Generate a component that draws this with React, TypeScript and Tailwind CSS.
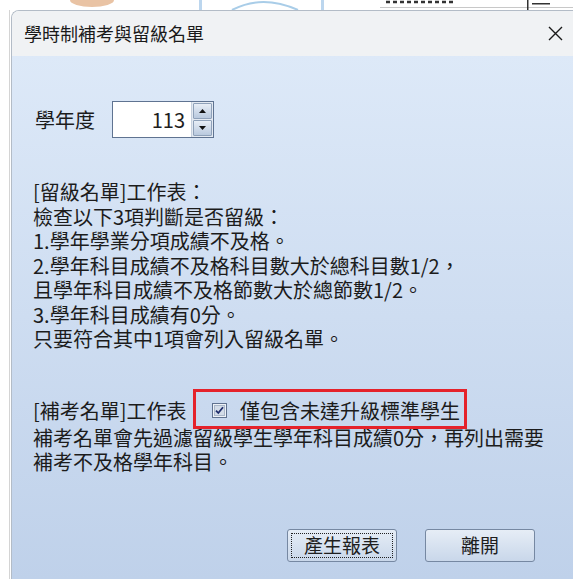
import React from 'react';

const font = { fontFamily: '"Noto Sans CJK TC", "Noto Sans", sans-serif' };

const TopStrip = () => (
  <div className="h-[10px] w-full bg-white">
    <svg width="573" height="10" viewBox="0 0 573 10">
      <ellipse cx="92" cy="0" rx="22" ry="7" fill="#e9c3a4" />
      <rect x="199" y="0" width="3" height="10" fill="#bcd6ee" />
      <rect x="321" y="0" width="3" height="10" fill="#bcd6ee" />
      <path d="M232 10 Q262 -6 298 10" stroke="#a9cde8" strokeWidth="2" fill="none" />
      <path d="M386 2H456" stroke="#333" strokeWidth="2.5" strokeDasharray="4 3" />
      <rect x="380" y="7" width="193" height="1" fill="#c8c8c8" />
      <rect x="527" y="0" width="1.5" height="10" fill="#333" />
      <rect x="532" y="3" width="18" height="1.5" fill="#333" />
    </svg>
  </div>
);

const Spinner = () => (
  <div className="flex h-[37px] w-[102px] border border-[#5f7391] bg-white">
    <div className="flex flex-1 items-center justify-end pr-[6px] text-[20px] text-[#1e1e1e]">113</div>
    <div className="flex w-[22px] flex-col gap-px border-l border-[#c7d1de] bg-[#e4eaf2] p-px">
      <div className="flex flex-1 items-center justify-center rounded-[1px] border border-[#8fa1b9] bg-gradient-to-b from-[#e8eef6] to-[#b9c9de]">
        <svg width="7" height="4" viewBox="0 0 7 4"><path d="M3.5 0L7 4H0z" fill="#111" /></svg>
      </div>
      <div className="flex flex-1 items-center justify-center rounded-[1px] border border-[#8fa1b9] bg-gradient-to-b from-[#e8eef6] to-[#b9c9de]">
        <svg width="7" height="4" viewBox="0 0 7 4"><path d="M0 0H7L3.5 4z" fill="#111" /></svg>
      </div>
    </div>
  </div>
);

const Checkbox = () => (
  <svg width="15" height="15" viewBox="0 0 15 15" className="shrink-0">
    <rect x="0.5" y="0.5" width="14" height="14" fill="#eef2f7" stroke="#60728f" />
    <rect x="2.5" y="2.5" width="10" height="10" fill="#d3dce8" stroke="#aab7c9" />
    <path d="M4 7.6L6.3 10L11 4.2" stroke="#1f2d6b" strokeWidth="1.8" fill="none" />
  </svg>
);

const Button = ({ label, focused }: { label: string; focused?: boolean }) => (
  <div className="flex h-[33px] w-[110px] items-center justify-center rounded-[3px] border border-[#7688a2] bg-gradient-to-b from-[#e6edf6] to-[#c9d7ea] p-[3px]">
    <div
      className={
        focused
          ? 'flex h-full w-full items-center justify-center border border-dotted border-[#222] text-[19px] text-[#1e1e1e]'
          : 'flex h-full w-full items-center justify-center text-[19px] text-[#1e1e1e]'
      }
    >
      {label}
    </div>
  </div>
);

const rules = [
  '[留級名單]工作表：',
  '檢查以下3項判斷是否留級：',
  '1.學年學業分項成績不及格。',
  '2.學年科目成績不及格科目數大於總科目數1/2，',
  '且學年科目成績不及格節數大於總節數1/2。',
  '3.學年科目成績有0分。',
  '只要符合其中1項會列入留級名單。',
];

export default function App() {
  return (
    <div className="flex h-[579px] w-[573px] flex-col overflow-hidden bg-white" style={font}>
      <TopStrip />
      <div className="flex flex-1">
        <div className="w-[9px] bg-white" />
        <div className="w-px bg-[#d4d4d4]" />
        <div className="w-px bg-white" />
        <div className="flex flex-1 flex-col overflow-hidden rounded-tl-[8px] border-l border-t border-[#b3bcc7]">
          <div className="flex h-[45px] items-center justify-between bg-[#f0f2f4] pl-[12px] pr-[10px]">
            <span className="text-[18px] text-[#1a1a1a]">學時制補考與留級名單</span>
            <svg width="15" height="15" viewBox="0 0 15 15">
              <path d="M1 1L14 14M14 1L1 14" stroke="#1a1a1a" strokeWidth="1.4" />
            </svg>
          </div>
          <div className="flex flex-1 flex-col bg-gradient-to-b from-[#dde9f8] to-[#bfd1ea] pl-[21px] text-[20px] text-[#1c1c1c]">
            <div className="mt-[45px] flex items-center gap-[17px] pl-[2px]">
              <span>學年度</span>
              <Spinner />
            </div>
            <div className="mt-[42px] flex flex-col leading-[24.5px]">
              {rules.map((line) => (
                <div key={line} className="h-[24.5px] whitespace-nowrap">{line}</div>
              ))}
            </div>
            <div className="mt-[45px] flex h-[28px] items-center leading-[28px]">
              <span className="w-[179px] whitespace-nowrap">[補考名單]工作表</span>
              <div className="relative flex h-[28px] items-center gap-[13px]">
                <div className="absolute left-[-19px] top-[-8px] h-[40px] w-[274px] border-[3px] border-[#e5222b]" />
                <Checkbox />
                <span className="whitespace-nowrap">僅包含未達升級標準學生</span>
              </div>
            </div>
            <div className="mt-px flex flex-col leading-[24.5px]">
              <div className="h-[24.5px] whitespace-nowrap">補考名單會先過濾留級學生學年科目成績0分，再列出需要</div>
              <div className="h-[24.5px] whitespace-nowrap">補考不及格學年科目。</div>
            </div>
            <div className="mt-[54px] flex justify-end gap-[28px] pr-[38px]">
              <Button label="產生報表" focused />
              <Button label="離開" />
            </div>
          </div>
        </div>
      </div>
    </div>
  );
}
